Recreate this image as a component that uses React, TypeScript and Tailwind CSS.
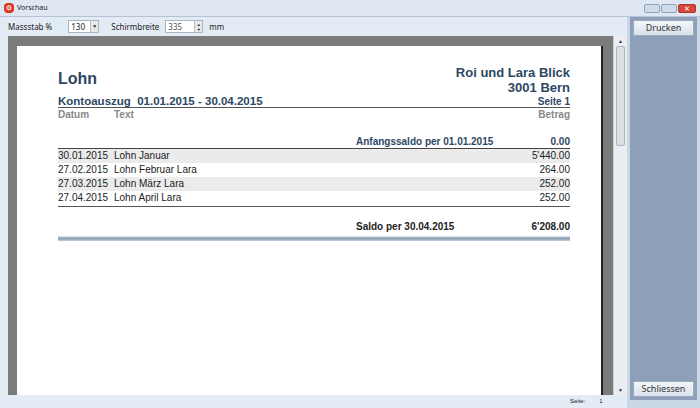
export default function App() {
  const rows = [
    ["30.01.2015", "Lohn Januar", "5'440.00", true],
    ["27.02.2015", "Lohn Februar Lara", "264.00", false],
    ["27.03.2015", "Lohn März Lara", "252.00", true],
    ["27.04.2015", "Lohn April Lara", "252.00", false],
  ] as const;
  const blue = "text-[#2d4763]";
  return (
    <div className="w-[700px] h-[408px] bg-[#c9d7e6] flex flex-col overflow-hidden text-[#222]" style={{ fontFamily: '"Liberation Sans", Arial, sans-serif' }}>
      <div className="h-[17px] flex items-center px-[4px] bg-[#dfe8f2] border-b border-[#b4c4d6]">
        <div className="w-[10px] h-[10px] rounded-sm bg-[#d32] text-white text-[7px] leading-[10px] text-center font-bold">⊙</div>
        <span className="ml-[3px] text-[7px]" style={{ fontFamily: '"Noto Sans", sans-serif' }}>Vorschau</span>
        <div className="ml-auto flex gap-[1px]">
          <div className="w-[16px] h-[9px] bg-[#cfdbe8] border border-[#8ea4bd] rounded-[2px]" />
          <div className="w-[16px] h-[9px] bg-[#cfdbe8] border border-[#8ea4bd] rounded-[2px]" />
          <div className="w-[18px] h-[9px] bg-[#d9493a] border border-[#a33] rounded-[2px] text-white text-[7px] leading-[7px] text-center">✕</div>
        </div>
      </div>
      <div className="flex flex-1 min-h-0">
        <div className="flex-1 flex flex-col bg-[#e3ebf4] min-w-0">
          <div className="h-[19px] flex items-center text-[8px] pl-[8px] gap-[6px]" style={{ fontFamily: '"Noto Sans", sans-serif' }}>
            <span>Massstab %</span>
            <div className="ml-[10px] w-[31px] h-[13px] bg-white border border-[#a9b6c4] flex items-center justify-between pl-[2px]">
              <span>130</span><span className="w-[8px] h-[11px] bg-[#e8e8e8] border-l border-[#bbb] text-[5px] leading-[11px] text-center">▼</span>
            </div>
            <span className="ml-[6px]">Schirmbreite</span>
            <div className="w-[38px] h-[13px] bg-white border border-[#a9b6c4] flex items-center justify-between pl-[2px]">
              <span className="text-[#555]">335</span><span className="w-[8px] h-[11px] bg-[#e8e8e8] border-l border-[#bbb] text-[4px] leading-[5px] text-center flex flex-col justify-center">▲<br />▼</span>
            </div>
            <span>mm</span>
          </div>
          <div className="flex-1 flex ml-[8px] min-h-0">
            <div className="flex-1 bg-[#7b7b7b] pt-[10px] pl-[9px] pr-[10px] overflow-hidden">
              <div className="bg-white h-full border-r-[2px] border-[#222] pt-[19px] pl-[41px] pr-[31px] text-[10px]">
                <div className="flex justify-between">
                  <div className={`text-[16px] font-bold ${blue} pt-[2px]`}>Lohn</div>
                  <div className={`text-right font-bold ${blue}`}>
                    <div className="text-[13px] leading-[15px]">Roi und Lara Blick</div>
                    <div className="text-[13px] leading-[15px]">3001 Bern</div>
                  </div>
                </div>
                <div className="flex justify-between items-end border-b border-[#555] leading-[11px] mt-[1px]">
                  <span className={`text-[11.5px] font-bold ${blue}`}>Kontoauszug&nbsp;&nbsp;01.01.2015 - 30.04.2015</span>
                  <span className={`text-[10px] font-bold ${blue}`}>Seite 1</span>
                </div>
                <div className="flex font-bold text-[#888] text-[10px] leading-[13px]">
                  <span className="w-[56px]">Datum</span><span className="flex-1">Text</span><span>Betrag</span>
                </div>
                <div className={`flex font-bold ${blue} mt-[15px] leading-[12px] border-b border-[#444]`}>
                  <span className="ml-[298px] flex-1">Anfangssaldo per 01.01.2015</span><span>0.00</span>
                </div>
                {rows.map(([d, t, a, s]) => (
                  <div key={d} className={`flex leading-[14px] ${s ? "bg-[#ebebeb]" : ""}`}>
                    <span className="w-[56px]">{d}</span><span className="flex-1">{t}</span><span>{a}</span>
                  </div>
                ))}
                <div className="border-t border-[#555] mt-[1px]" />
                <div className="flex font-bold leading-[12px] mt-[14px]">
                  <span className="ml-[298px] flex-1">Saldo per 30.04.2015</span><span>6'208.00</span>
                </div>
                <div className="h-[5px] mt-[3px] bg-gradient-to-b from-[#e6ebf1] via-[#8a9db5] to-[#c5d0dc]" />
              </div>
            </div>
            <div className="w-[14px] bg-[#eaeef2] border-l border-[#c8d0d8] flex flex-col items-center text-[5px] text-[#333]">
              <span className="h-[10px] leading-[10px]">▲</span>
              <div className="w-[9px] h-[100px] bg-[#dcdfe3] border border-[#aeb6bf] rounded-[2px]" />
              <span className="mt-auto h-[10px] leading-[10px]">▼</span>
            </div>
          </div>
          <div className="h-[13px] flex items-center text-[6px] pl-[570px] gap-[14px]">
            <span>Seite:</span><span>1</span>
          </div>
        </div>
        <div className="w-[67px] ml-[3px] mr-[3px] mb-[8px] bg-[#8da0b8] flex flex-col p-[3px]">
          <button className="h-[16px] bg-gradient-to-b from-[#f3f6fa] to-[#d8e1ec] border border-[#9aa9bb] text-[9px] text-[#333]" style={{ fontFamily: '"Noto Sans", sans-serif' }}>Drucken</button>
          <button className="mt-auto h-[16px] bg-gradient-to-b from-[#f3f6fa] to-[#d8e1ec] border border-[#9aa9bb] text-[9px] text-[#333]" style={{ fontFamily: '"Noto Sans", sans-serif' }}>Schliessen</button>
        </div>
      </div>
    </div>
  );
}
